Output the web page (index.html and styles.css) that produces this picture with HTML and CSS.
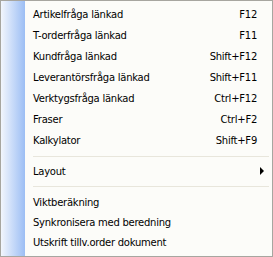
FILE: index.html
```html
<!DOCTYPE html>
<html lang="sv">
    <head>
        <meta charset="UTF-8" />
        <title>Meny</title>
        <link rel="stylesheet" href="styles.css">
    </head>
    <body>
        <div class="menu">
            <div class="menu-item"><span class="label">Artikelfråga länkad</span><span class="key">F12</span></div>
            <div class="menu-item"><span class="label">T-orderfråga länkad</span><span class="key">F11</span></div>
            <div class="menu-item"><span class="label">Kundfråga länkad</span><span class="key">Shift+F12</span></div>
            <div class="menu-item"><span class="label">Leverantörsfråga länkad</span><span class="key">Shift+F11</span></div>
            <div class="menu-item"><span class="label">Verktygsfråga länkad</span><span class="key">Ctrl+F12</span></div>
            <div class="menu-item"><span class="label">Fraser</span><span class="key">Ctrl+F2</span></div>
            <div class="menu-item"><span class="label">Kalkylator</span><span class="key">Shift+F9</span></div>
            <div class="separator first"></div>
            <div class="menu-item short"><span class="label">Layout</span><span class="arrow"></span></div>
            <div class="separator"></div>
            <div class="menu-item short"><span class="label">Viktberäkning</span></div>
            <div class="menu-item short"><span class="label">Synkronisera med beredning</span></div>
            <div class="menu-item short"><span class="label">Utskrift tillv.order dokument</span></div>
        </div>
    </body>
</html>
```
FILE: styles.css
```css
body {
    margin: 0;
    font-family: "DejaVu Sans", sans-serif;
    font-size: 10px;
    letter-spacing: -0.25px;
    color: #000;
}
.menu {
    width: 273px;
    height: 257px;
    box-sizing: border-box;
    border: 1px solid #a7a6a0;
    padding-top: 3px;
    background: linear-gradient(to right, #f2f6fd 0, #9cbef4 24px, #fcfcf9 24px);
}
.menu-item {
    display: flex;
    align-items: center;
    height: 21px;
    padding-left: 32px;
    padding-right: 15px;
}
.menu-item.short {
    height: 20px;
}
.label {
    flex: 1;
    white-space: nowrap;
}
.key {
    white-space: nowrap;
}
.arrow {
    width: 0;
    height: 0;
    margin-right: -7px;
    border-top: 4px solid transparent;
    border-bottom: 4px solid transparent;
    border-left: 4px solid #000;
}
.separator {
    height: 1px;
    margin: 5px 3px 5px 32px;
    background: #e8e6dc;
}
.separator.first {
    margin-bottom: 4px;
}
```
